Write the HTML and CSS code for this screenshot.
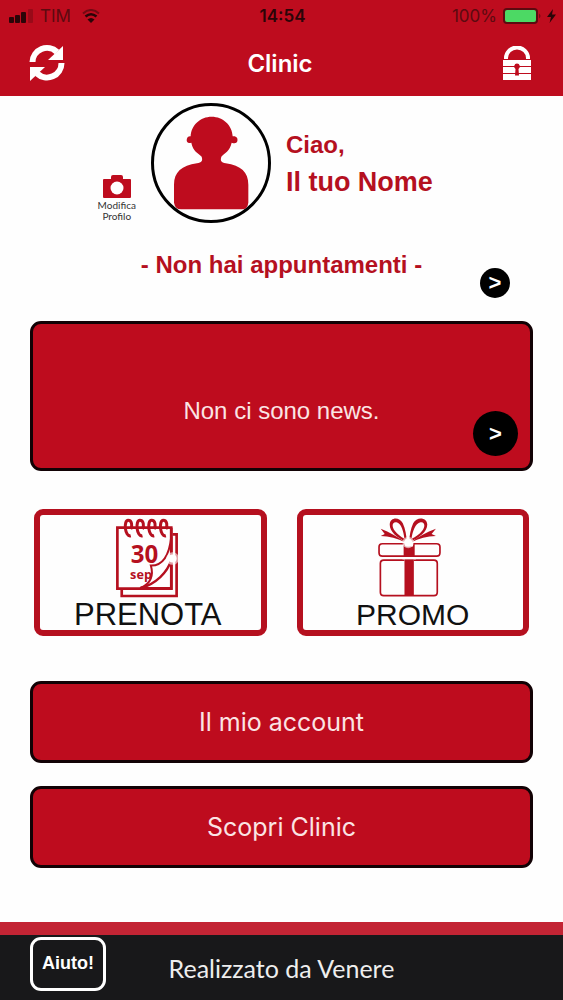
FILE: index.html
```
<!DOCTYPE html>
<html lang="it">
<head>
  <meta charset="UTF-8" />
  <meta name="viewport" content="width=device-width, initial-scale=1.0" />
  <title>Clinic</title>
  <link rel="stylesheet" href="styles.css">
</head>
<body>
  <header class="topbar">
    <div class="status">
      <div class="status-left">
        <svg width="24" height="14" viewBox="0 0 24 14">
          <rect x="0" y="8" width="5" height="6" rx="1" />
          <rect x="6" y="6" width="5" height="8" rx="1" />
          <rect x="12" y="3" width="5" height="11" rx="1" />
          <rect x="19" y="0" width="5" height="14" rx="1" opacity="0.25" />
        </svg>
        <span>TIM</span>
        <svg class="wifi" width="18" height="14" viewBox="0 0 18 14">
          <path d="M1 4.5Q9 -2.5 17 4.5" fill="none" stroke="#2a0508" stroke-width="2" opacity="0.5" />
          <path d="M3.5 7.5Q9 3 14.500 7.500" fill="none" stroke="#2a0508" stroke-width="2.6" />
          <path d="M9 14L5.500 10.500Q9 7.500 12.500 10.500Z" />
        </svg>
      </div>
      <span class="clock">14:54</span>
      <div class="status-right">
        <span>100%</span>
        <svg width="38" height="16" viewBox="0 0 38 16">
          <rect x="1" y="1" width="33" height="14" rx="3" fill="#4cd964" stroke="#5c0a10" stroke-width="2" />
          <path d="M36 5.500Q39 8 36 10.500Z" opacity="0.5" />
        </svg>
        <svg width="9" height="14" viewBox="0 0 9 14">
          <path d="M6 0L0 8H4L2.500 14L9 5.500H5Z" />
        </svg>
      </div>
    </div>
    <nav class="nav">
      <button class="icon-btn" type="button" aria-label="Aggiorna">
        <svg width="36" height="38" viewBox="0 0 36 38">
          <path d="M3.500 18A14.500 14.500 0 0 1 28 8" fill="none" stroke="#fff" stroke-width="6" />
          <path d="M34 2V16H19Z" fill="#fff" />
          <path d="M32.500 19A14.500 14.500 0 0 1 8 29.500" fill="none" stroke="#fff" stroke-width="6" />
          <path d="M1 37V23H16Z" fill="#fff" />
        </svg>
      </button>
      <h1>Clinic</h1>
      <button class="icon-btn lock" type="button" aria-label="Blocca">
        <svg width="28" height="34" viewBox="0 0 28 34">
          <path d="M3 13V12A11 10.500 0 0 1 25 12V13" fill="none" stroke="#fff" stroke-width="4" />
          <path d="M0 14H28V20H0ZM0 21H28V27H0ZM0 28H28V34H0Z" fill="#fff" />
          <path d="M14 17.500A3 3 0 0 1 15.500 23L16 29.500H12L12.500 23A3 3 0 0 1 14 17.500Z" fill="#be0c1e" />
        </svg>
      </button>
    </nav>
  </header>

  <main>
    <section class="profile">
      <a class="edit" href="#">
        <svg width="28" height="23" viewBox="0 0 28 23">
          <path d="M1 4H8V2Q8 0 10 0H18Q20 0 20 2V4H27Q28 4 28 5V22Q28 23 27 23H1Q0 23 0 22V5Q0 4 1 4Z" fill="#be0c1e" />
          <circle cx="14" cy="13" r="6.500" fill="#fff" />
        </svg>
        Modifica<br>Profilo
      </a>
      <div class="avatar">
        <svg width="76" height="94" viewBox="0 0 228 282">
          <path d="M116 2C150 2 178 28 179 61C192 60 195 68 193 76C191 82 185 83 176 80C171 105 154 112 145 122C141 135 145 139 158 142C204 149 226 168 226 206V260Q224 279 206 280H24Q6 279 3 260V206C3 168 26 149 72 142C86 139 90 135 86 122C76 112 59 105 55 80C46 83 42 81 41 73C41 65 46 60 53 61C54 28 82 2 116 2Z" fill="#be0c1e" />
        </svg>
      </div>
      <div class="greeting">
        <p class="hello">Ciao,</p>
        <p class="name">Il tuo Nome</p>
      </div>
    </section>

    <section class="appointments">
      <h2>- Non hai appuntamenti -</h2>
      <a class="arrow" href="#">&gt;</a>
    </section>

    <section class="news">
      <p>Non ci sono news.</p>
      <a class="arrow arrow-big" href="#">&gt;</a>
    </section>

    <div class="tiles">
      <a class="tile prenota" href="#">
        <svg width="67" height="82" viewBox="270 50 200 245">
          <path d="M445 102H457V286H293V268" fill="none" stroke="#b5101f" stroke-width="8" />
          <path d="M280 82H441V264H280Z" fill="none" stroke="#b5101f" stroke-width="8" />
          <text x="320" y="186" class="cal-day">30</text>
          <text x="318" y="234" class="cal-month">sep</text>
          <path d="M441 110C436 155 420 196 380 195C388 222 382 250 348 262H441Z" fill="#fff" stroke="#b5101f" stroke-width="6" />
          <path d="M350 262C395 250 430 215 441 178" fill="none" stroke="#b5101f" stroke-width="7" />
          <path d="M441 82V264H350" fill="none" stroke="#b5101f" stroke-width="8" />
          <g fill="none" stroke="#b5101f" stroke-width="9">
            <path d="M320 106C302 111 298 60 312 60C324 60 325 76 320 86M355 106C337 111 333 60 347 60C359 60 360 76 355 86M390 106C372 111 368 60 382 60C394 60 395 76 390 86M425 106C407 111 403 60 417 60C429 60 430 76 425 86" />
          </g>
          <circle cx="445" cy="174" r="19" fill="#fff" opacity="0.6" />
          <circle cx="445" cy="174" r="12" fill="#fff" />
        </svg>
        <span>PRENOTA</span>
      </a>
      <a class="tile promo" href="#">
        <svg width="67" height="82" viewBox="270 50 200 245">
          <g fill="none" stroke="#b5101f" stroke-width="5">
            <path d="M352 130H286Q276 130 276 140V157Q276 167 286 167H352ZM380 130H448Q458 130 458 140V157Q458 167 448 167H380Z" />
            <path d="M352 179H290Q280 179 280 189V275Q280 285 290 285H440Q450 285 450 275V189Q450 179 440 179H380" />
          </g>
          <path d="M352 138H380V286H352Z" fill="#b5101f" />
          <path d="M346 173H386" stroke="#fff" stroke-width="7" />
          <g fill="#b5101f">
            <path fill-rule="evenodd" d="M359 126C328 112 307 93 308 72C309 50 337 48 347 69C355 87 358 105 359 126ZM352 115C349 94 343 69 328 66C315 64 313 78 323 91C331 101 341 109 352 115Z" />
            <path fill-rule="evenodd" d="M366 126C397 112 421 93 420 72C419 50 388 48 378 69C370 87 367 105 366 126ZM373 115C376 94 384 69 400 66C413 64 415 78 405 91C397 101 386 109 373 115Z" />
            <path d="M355 126C330 108 308 96 281 85L293 101L281 107C306 108 331 114 355 126Z" />
            <path d="M371 126C394 108 417 96 446 85L433 101L446 107C420 108 395 114 371 126Z" />
          </g>
          <circle cx="363" cy="126" r="17" fill="#fff" opacity="0.6" />
          <circle cx="363" cy="126" r="12" fill="#fff" />
        </svg>
        <span>PROMO</span>
      </a>
    </div>

    <button class="big-btn" type="button">Il mio account</button>
    <button class="big-btn" type="button">Scopri Clinic</button>
  </main>

  <footer>
    <button class="help" type="button">Aiuto!</button>
    <p>Realizzato da Venere</p>
  </footer>
</body>
</html>
```

FILE: styles.css
```
* {
  box-sizing: border-box;
}
body {
  margin: 0;
  min-height: 100vh;
  display: flex;
  flex-direction: column;
  background: #fefefe;
  font-family: "Liberation Sans", Arial, sans-serif;
}
h1, h2, p {
  margin: 0;
}
a {
  text-decoration: none;
}
svg {
  display: block;
  flex: none;
}
button {
  font-family: inherit;
  cursor: pointer;
}

/* header */
.topbar {
  background: #be0c1e;
  height: 96px;
}
.status {
  display: grid;
  grid-template-columns: 1fr auto 1fr;
  align-items: center;
  height: 32px;
  padding: 0 7px 0 9px;
  font-family: Inter, sans-serif;
  font-size: 17px;
  color: #5c0a10;
  fill: #2a0508;
}
.status-left, .status-right {
  display: flex;
  align-items: center;
  gap: 7px;
}
.status-right {
  justify-content: flex-end;
  gap: 6px;
}
.wifi {
  margin-left: 4px;
}
.clock {
  font-weight: 600;
  color: #2a0508;
}
.nav {
  display: grid;
  grid-template-columns: 1fr auto 1fr;
  align-items: center;
  height: 62px;
  padding: 0 32px 0 29px;
  color: #fff;
}
.nav h1 {
  font-family: Inter, sans-serif;
  font-size: 24px;
  font-weight: 600;
}
.icon-btn {
  justify-self: start;
  padding: 0;
  border: none;
  background: none;
}
.lock {
  justify-self: end;
}

/* content */
main {
  padding: 7px 30px 54px;
}
.profile {
  display: grid;
  grid-template-columns: 3fr 120px 7fr;
  column-gap: 15px;
}
.edit {
  display: flex;
  flex-direction: column;
  align-items: center;
  justify-self: end;
  padding-top: 72px;
  font-family: Lato, sans-serif;
  font-size: 10px;
  line-height: 11px;
  text-align: center;
  color: #333;
}
.edit svg {
  margin-bottom: 2px;
}
.avatar {
  display: flex;
  justify-content: center;
  height: 120px;
  padding-top: 10px;
  border: 3px solid #000;
  border-radius: 50%;
}
.greeting {
  padding-top: 26px;
  color: #b5101f;
  font-weight: bold;
}
.hello {
  font-size: 24px;
  line-height: 32px;
}
.name {
  margin-top: 5px;
  font-size: 27px;
  line-height: 32px;
}
.appointments {
  display: grid;
  grid-template-columns: 1fr auto 1fr;
  height: 75px;
  padding-top: 27px;
}
.appointments h2 {
  grid-column: 2;
  font-size: 24px;
  line-height: 30px;
  color: #b5101f;
}
.arrow {
  display: flex;
  justify-content: center;
  align-items: center;
  align-self: end;
  justify-self: end;
  width: 30px;
  height: 30px;
  margin-right: 23px;
  border-radius: 50%;
  background: #000;
  color: #fff;
  font-size: 22px;
  font-weight: bold;
}
.news {
  position: relative;
  display: flex;
  justify-content: center;
  height: 150px;
  margin-top: 23px;
  padding-top: 71px;
  border: 3px solid #120205;
  border-radius: 11px;
  background: #be0c1e;
  color: #fbe4e4;
  font-size: 24px;
  line-height: 32px;
}
.arrow-big {
  position: absolute;
  right: 12px;
  bottom: 12px;
  width: 45px;
  height: 45px;
  margin: 0;
}
.tiles {
  display: grid;
  grid-template-columns: 1fr 1fr;
  gap: 30px;
  margin: 38px 4px 45px;
}
.tile {
  display: flex;
  flex-direction: column;
  align-items: center;
  height: 127px;
  padding: 2px 5px 0 0;
  border: 6px solid #b5101f;
  border-radius: 9px;
  color: #111;
  font-size: 31px;
  line-height: 32px;
}
.promo {
  padding-right: 0;
  font-size: 30px;
}
.promo svg {
  margin-right: 4px;
}
.cal-day, .cal-month {
  font-family: "Open Sans", sans-serif;
  font-weight: bold;
  font-size: 72px;
  fill: #b5101f;
}
.cal-month {
  font-size: 38px;
}
.big-btn {
  display: block;
  width: 100%;
  height: 82px;
  border: 3px solid #120205;
  border-radius: 11px;
  background: #be0c1e;
  color: #fbe4e4;
  font-family: Inter, sans-serif;
  font-size: 25px;
}
.big-btn + .big-btn {
  margin-top: 23px;
}

/* footer */
footer {
  display: grid;
  grid-template-columns: 1fr auto 1fr;
  align-items: center;
  height: 78px;
  margin-top: auto;
  padding: 0 30px;
  border-top: 13px solid #c32434;
  background: #18181a;
  color: #eee;
}
.help {
  width: 76px;
  height: 54px;
  margin-bottom: 8px;
  padding: 0;
  border: 3px solid #fff;
  border-radius: 11px;
  background: none;
  color: #fff;
  font-size: 18px;
  font-weight: bold;
}
footer p {
  font-family: Lato, sans-serif;
  font-size: 25px;
}
```
